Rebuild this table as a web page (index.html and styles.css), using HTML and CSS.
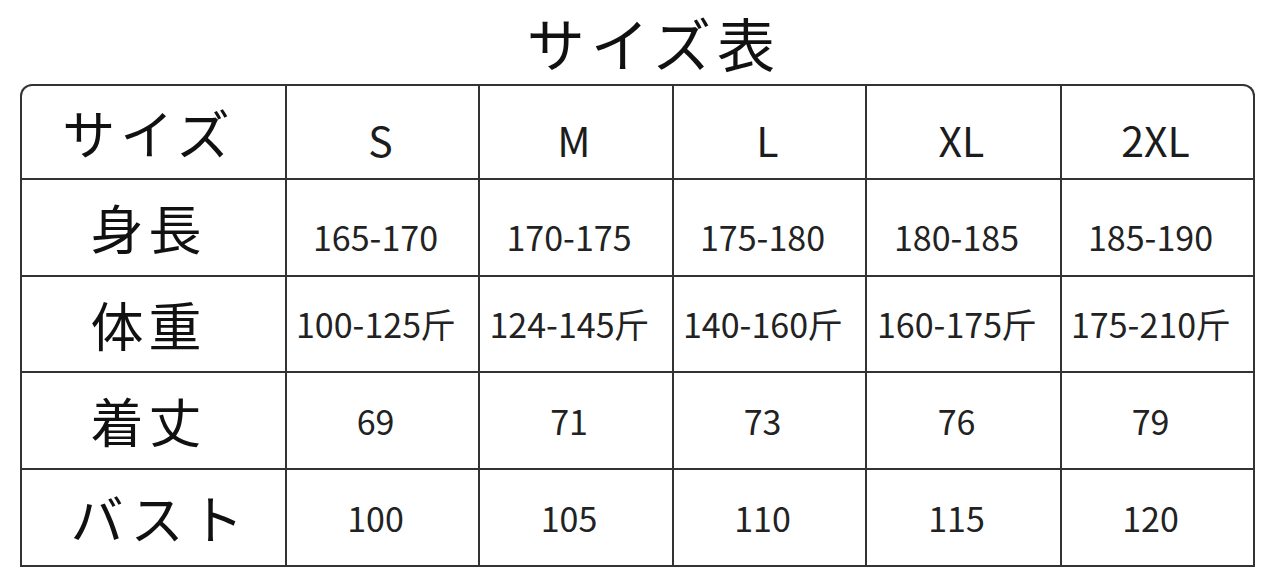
FILE: index.html
```html
<!DOCTYPE html>
<html lang="ja">
<head>
<meta charset="utf-8">
<title>サイズ表</title>
<link rel="stylesheet" href="styles.css">
</head>
<body>
<div class="page">
  <h1 class="title">サイズ表</h1>
  <div class="chart">
    <div class="cell label">サイズ</div>
    <div class="cell head">S</div>
    <div class="cell head">M</div>
    <div class="cell head">L</div>
    <div class="cell head">XL</div>
    <div class="cell head last">2XL</div>

    <div class="cell label">身長</div>
    <div class="cell num low">165-170</div>
    <div class="cell num low">170-175</div>
    <div class="cell num low">175-180</div>
    <div class="cell num low">180-185</div>
    <div class="cell num low last">185-190</div>

    <div class="cell label">体重</div>
    <div class="cell num">100-125斤</div>
    <div class="cell num">124-145斤</div>
    <div class="cell num">140-160斤</div>
    <div class="cell num">160-175斤</div>
    <div class="cell num last">175-210斤</div>

    <div class="cell label">着丈</div>
    <div class="cell num">69</div>
    <div class="cell num">71</div>
    <div class="cell num">73</div>
    <div class="cell num">76</div>
    <div class="cell num last">79</div>

    <div class="cell label wide">バスト</div>
    <div class="cell num">100</div>
    <div class="cell num">105</div>
    <div class="cell num">110</div>
    <div class="cell num">115</div>
    <div class="cell num last">120</div>
  </div>
</div>
</body>
</html>
```

FILE: styles.css
```css
* { box-sizing: border-box; }

html, body {
  margin: 0;
  padding: 0;
  background: #ffffff;
}

body {
  width: 1280px;
  height: 568px;
  overflow: hidden;
  color: #1c1c1c;
  font-family: "Noto Sans CJK JP", "Noto Sans CJK SC", sans-serif;
}

.page {
  display: flex;
  flex-direction: column;
}

.title {
  margin: 0;
  height: 84px;
  padding: 0 0 0 28px;
  text-align: center;
  font-size: 58px;
  font-weight: 400;
  letter-spacing: 6px;
  line-height: normal;
  color: #111;
}

.chart {
  margin-left: 20px;
  width: 1235px;
  display: grid;
  grid-template-columns: 265px 193px 194px 193px 195px 1fr;
  grid-template-rows: 94px 97px 96px 97px 97px;
  border: 2px solid #333;
  border-bottom: none;
  border-radius: 12px 12px 0 0;
  overflow: hidden;
}

.cell {
  display: flex;
  align-items: center;
  justify-content: center;
  border-right: 2px solid #333;
  border-bottom: 2px solid #333;
  line-height: 1;
}

.cell.last { border-right: none; }

.label {
  font-family: "Noto Sans CJK JP", sans-serif;
  font-size: 53px;
  letter-spacing: 5px;
  color: #111;
  padding-right: 10px;
}

.label.wide { padding-left: 24px; letter-spacing: 7px; }

.head {
  font-family: "Noto Sans CJK SC", sans-serif;
  font-size: 41px;
  padding-top: 14px;
  padding-right: 4px;
}

.num {
  font-family: "Noto Sans CJK SC", sans-serif;
  font-size: 34px;
  padding-right: 14px;
  color: #222;
}

.num.low { padding-top: 18px; }
```
